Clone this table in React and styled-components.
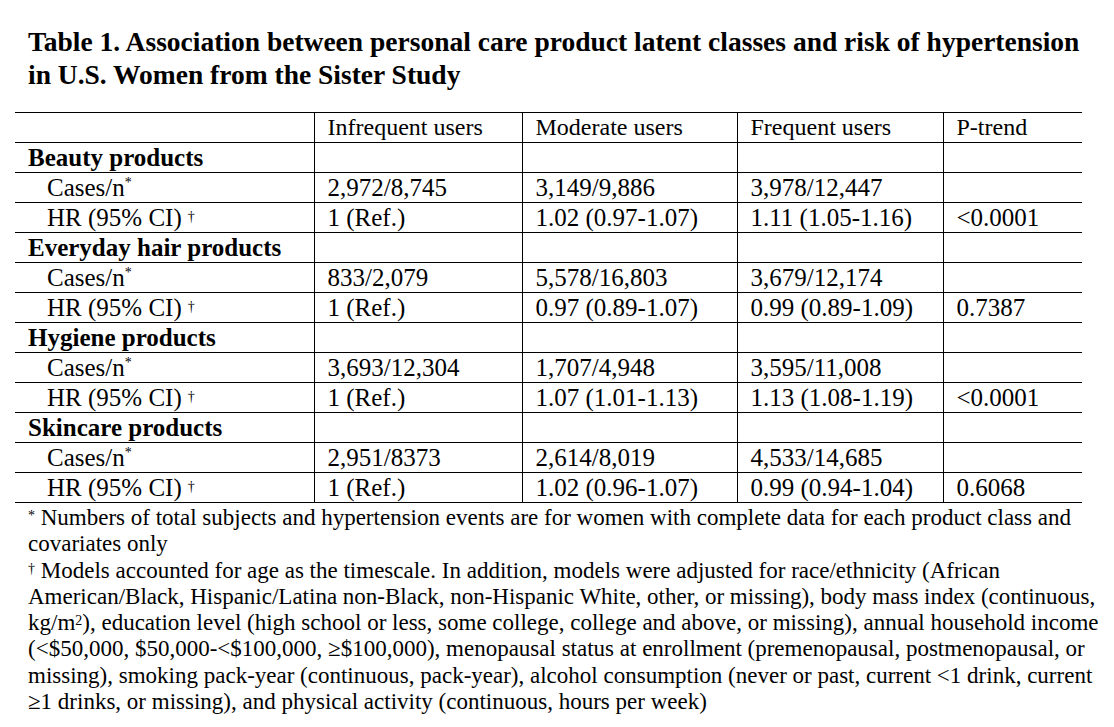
import React from 'react';
import styled, { createGlobalStyle } from 'styled-components';

const GlobalStyle = createGlobalStyle`
  html, body {
    margin: 0;
    padding: 0;
    background: #ffffff;
  }
  body {
    font-family: "Liberation Serif", "Times New Roman", serif;
    color: #000;
  }
`;

const Page = styled.div`
  width: 1114px;
  height: 727px;
  padding: 25px 0 0 15px;
  box-sizing: border-box;
  overflow: hidden;
`;

const Title = styled.h1`
  margin: 0 0 21px 13px;
  font-size: 27.5px;
  line-height: 33px;
  font-weight: bold;
  white-space: nowrap;
`;

const Table = styled.table`
  border-collapse: collapse;
  table-layout: fixed;
  width: 1067px;
  font-family: "Liberation Serif", "Times New Roman", serif;
  font-size: 25px;
  line-height: 29px;
  td {
    border-top: 1px solid #000;
    border-bottom: 1px solid #000;
    padding: 0 0 0 13px;
    height: 29px;
    white-space: nowrap;
    vertical-align: middle;
  }
  td + td {
    border-left: 1px solid #000;
  }
`;

const Head = styled.td`
  && {
    font-size: 24px;
  }
`;

const Label = styled.td`
  && {
    padding-left: ${p => (p.$section ? '13px' : '32px')};
    font-weight: ${p => (p.$section ? 'bold' : 'normal')};
  }
`;

const Sup = styled.sup`
  font-size: 14px;
  line-height: 0;
  vertical-align: ${p => p.$low ? '5px' : '9px'};
  margin-left: ${p => p.$gap ? '6px' : '0'};
`;

const Notes = styled.div`
  margin-top: 2px;
  padding-left: 13px;
  font-size: 23px;
  line-height: 26.3px;
  white-space: nowrap;
`;

const cols = [299, 208, 215, 206, 139];

const groups = [
  {
    name: 'Beauty products',
    cases: ['2,972/8,745', '3,149/9,886', '3,978/12,447'],
    hr: ['1 (Ref.)', '1.02 (0.97-1.07)', '1.11 (1.05-1.16)', '<0.0001'],
  },
  {
    name: 'Everyday hair products',
    cases: ['833/2,079', '5,578/16,803', '3,679/12,174'],
    hr: ['1 (Ref.)', '0.97 (0.89-1.07)', '0.99 (0.89-1.09)', '0.7387'],
  },
  {
    name: 'Hygiene products',
    cases: ['3,693/12,304', '1,707/4,948', '3,595/11,008'],
    hr: ['1 (Ref.)', '1.07 (1.01-1.13)', '1.13 (1.08-1.19)', '<0.0001'],
  },
  {
    name: 'Skincare products',
    cases: ['2,951/8373', '2,614/8,019', '4,533/14,685'],
    hr: ['1 (Ref.)', '1.02 (0.96-1.07)', '0.99 (0.94-1.04)', '0.6068'],
  },
];

export default function App() {
  return (
    <>
      <GlobalStyle />
      <Page>
        <Title>
          Table 1. Association between personal care product latent classes and risk of hypertension
          <br />
          in U.S. Women from the Sister Study
        </Title>
        <Table>
          <colgroup>
            {cols.map((w, i) => <col key={i} style={{ width: w }} />)}
          </colgroup>
          <tbody>
            <tr>
              <td></td>
              <Head>Infrequent users</Head>
              <Head>Moderate users</Head>
              <Head>Frequent users</Head>
              <Head>P-trend</Head>
            </tr>
            {groups.map(g => (
              <React.Fragment key={g.name}>
                <tr>
                  <Label $section>{g.name}</Label>
                  <td></td><td></td><td></td><td></td>
                </tr>
                <tr>
                  <Label>Cases/n<Sup>*</Sup></Label>
                  {g.cases.map((c, i) => <td key={i}>{c}</td>)}
                  <td></td>
                </tr>
                <tr>
                  <Label>HR (95% CI)<Sup $gap $low>†</Sup></Label>
                  {g.hr.map((c, i) => <td key={i}>{c}</td>)}
                </tr>
              </React.Fragment>
            ))}
          </tbody>
        </Table>
        <Notes>
          <Sup $low>*</Sup> Numbers of total subjects and hypertension events are for women with complete data for each product class and
          <br />
          covariates only
          <br />
          <Sup $low>†</Sup> Models accounted for age as the timescale. In addition, models were adjusted for race/ethnicity (African
          <br />
          American/Black, Hispanic/Latina non-Black, non-Hispanic White, other, or missing), body mass index (continuous,
          <br />
          kg/m<Sup $low>2</Sup>), education level (high school or less, some college, college and above, or missing), annual household income
          <br />
          (&lt;$50,000, $50,000-&lt;$100,000, ≥$100,000), menopausal status at enrollment (premenopausal, postmenopausal, or
          <br />
          missing), smoking pack-year (continuous, pack-year), alcohol consumption (never or past, current &lt;1 drink, current
          <br />
          ≥1 drinks, or missing), and physical activity (continuous, hours per week)
        </Notes>
      </Page>
    </>
  );
}
